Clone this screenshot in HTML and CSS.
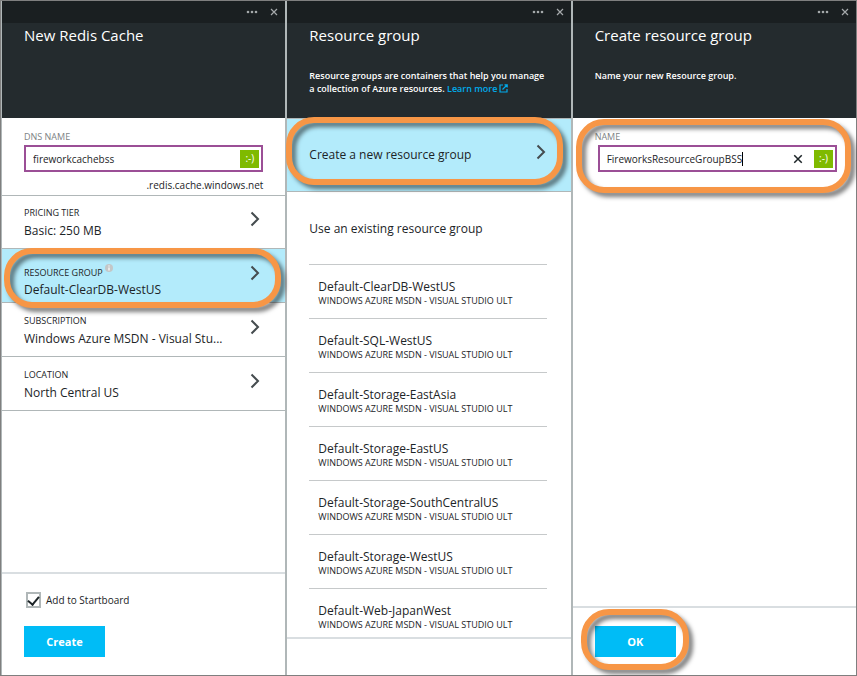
FILE: index.html
```html
<!DOCTYPE html>
<html lang="en">
<head>
<meta charset="utf-8">
<title>New Redis Cache</title>
<link rel="stylesheet" href="styles.css">
</head>
<body>
<svg width="0" height="0" class="sprite" aria-hidden="true">
  <symbol id="dots" viewBox="0 0 12 4"><circle cx="2" cy="2" r="1.3"/><circle cx="6" cy="2" r="1.3"/><circle cx="10" cy="2" r="1.3"/></symbol>
  <symbol id="cross" viewBox="0 0 8 8"><path d="M1 1 7 7M7 1 1 7"/></symbol>
  <symbol id="chevron" viewBox="0 0 10 16"><path d="M1.5 1.5 8 8 1.5 14.5"/></symbol>
</svg>
<main class="journey">
  <section class="blade">
    <header class="head">
      <div class="bar">
        <button class="tool" aria-label="More"><svg class="dots"><use href="#dots"/></svg></button>
        <button class="tool" aria-label="Close"><svg class="cross"><use href="#cross"/></svg></button>
      </div>
      <h1 class="title">New Redis Cache</h1>
    </header>
    <div class="content">
      <div class="field">
        <label class="caption" for="dns">DNS NAME</label>
        <div class="box">
          <input class="text" id="dns" value="fireworkcachebss">
          <span class="valid">:-)</span>
        </div>
        <div class="suffix">.redis.cache.windows.net</div>
      </div>
      <button class="row">
        <span class="pair"><span class="key">PRICING TIER</span><span class="value">Basic: 250 MB</span></span>
        <svg class="chevron"><use href="#chevron"/></svg>
      </button>
      <button class="row selected ring ring-row">
        <span class="pair noted"><span class="key">RESOURCE GROUP <svg class="info" viewBox="0 0 8 8"><circle cx="4" cy="4" r="4" fill="#c3c7c8"/><path d="M4 1.4v1.2M4 3.4v3" stroke="#fff" stroke-width="1.2"/></svg></span><span class="value">Default-ClearDB-WestUS</span></span>
        <svg class="chevron"><use href="#chevron"/></svg>
      </button>
      <button class="row">
        <span class="pair"><span class="key">SUBSCRIPTION</span><span class="value">Windows Azure MSDN - Visual Stu...</span></span>
        <svg class="chevron"><use href="#chevron"/></svg>
      </button>
      <button class="row">
        <span class="pair"><span class="key">LOCATION</span><span class="value">North Central US</span></span>
        <svg class="chevron"><use href="#chevron"/></svg>
      </button>
    </div>
    <footer class="foot">
      <label class="check"><input class="tick" type="checkbox" checked>Add to Startboard</label>
      <button class="primary">Create</button>
    </footer>
  </section>

  <section class="blade">
    <header class="head">
      <div class="bar">
        <button class="tool" aria-label="More"><svg class="dots"><use href="#dots"/></svg></button>
        <button class="tool" aria-label="Close"><svg class="cross"><use href="#cross"/></svg></button>
      </div>
      <h1 class="title">Resource group</h1>
      <p class="intro">Resource groups are containers that help you manage a collection of Azure resources. <a class="link" href="#learn">Learn more <svg class="external" viewBox="0 0 9 9"><path d="M4 1H1v7h7V5M5.5.8h2.7v2.7M8 1 3.5 5.5"/></svg></a></p>
    </header>
    <div class="content">
      <button class="create selected ring ring-create">
        <span class="value">Create a new resource group</span>
        <svg class="chevron"><use href="#chevron"/></svg>
      </button>
      <h2 class="subhead">Use an existing resource group</h2>
      <ul class="groups">
        <li><button class="group"><span class="value">Default-ClearDB-WestUS</span><span class="key">WINDOWS AZURE MSDN - VISUAL STUDIO ULT</span></button></li>
        <li><button class="group"><span class="value">Default-SQL-WestUS</span><span class="key">WINDOWS AZURE MSDN - VISUAL STUDIO ULT</span></button></li>
        <li><button class="group"><span class="value">Default-Storage-EastAsia</span><span class="key">WINDOWS AZURE MSDN - VISUAL STUDIO ULT</span></button></li>
        <li><button class="group"><span class="value">Default-Storage-EastUS</span><span class="key">WINDOWS AZURE MSDN - VISUAL STUDIO ULT</span></button></li>
        <li><button class="group"><span class="value">Default-Storage-SouthCentralUS</span><span class="key">WINDOWS AZURE MSDN - VISUAL STUDIO ULT</span></button></li>
        <li><button class="group"><span class="value">Default-Storage-WestUS</span><span class="key">WINDOWS AZURE MSDN - VISUAL STUDIO ULT</span></button></li>
        <li><button class="group"><span class="value">Default-Web-JapanWest</span><span class="key">WINDOWS AZURE MSDN - VISUAL STUDIO ULT</span></button></li>
      </ul>
    </div>
    <footer class="foot empty"></footer>
  </section>

  <section class="blade">
    <header class="head">
      <div class="bar">
        <button class="tool" aria-label="More"><svg class="dots"><use href="#dots"/></svg></button>
        <button class="tool" aria-label="Close"><svg class="cross"><use href="#cross"/></svg></button>
      </div>
      <h1 class="title">Create resource group</h1>
      <p class="intro">Name your new Resource group.</p>
    </header>
    <div class="content">
      <div class="field named ring ring-field">
        <label class="caption" for="group">NAME</label>
        <div class="box">
          <input class="text fitted" id="group" value="FireworksResourceGroupBSS"><span class="caret"></span>
          <button class="clear" aria-label="Clear"><svg class="cross"><use href="#cross"/></svg></button>
          <span class="valid">:-)</span>
        </div>
      </div>
    </div>
    <footer class="foot short">
      <div class="ring ring-ok"><button class="primary">OK</button></div>
    </footer>
  </section>
</main>
</body>
</html>
```

FILE: styles.css
```css
* { box-sizing: border-box; }

body {
  margin: 0;
  font-family: "Open Sans", "Noto Sans", sans-serif;
  font-size: 12px;
  color: #1c2427;
}

button, input {
  font: inherit;
  color: inherit;
  background: none;
  border: 0;
  padding: 0;
  margin: 0;
  text-align: left;
}

.sprite { position: absolute; }

.journey {
  display: grid;
  grid-template-columns: repeat(3, 1fr);
  gap: 2px;
  min-height: 100vh;
  border: 1px solid #7f7f7f;
  padding-left: 1px;
  background: #b0b7b8;
}

.blade {
  display: flex;
  flex-direction: column;
  min-width: 0;
  background: #fff;
}

.head {
  height: 117px;
  background: #242b2e;
  color: #fff;
}
.bar {
  display: flex;
  justify-content: flex-end;
  align-items: center;
  gap: 12px;
  height: 22px;
  padding-right: 7px;
  background: #1a1f21;
}
.tool { display: flex; }
.dots { width: 12px; height: 4px; fill: #a5a9ab; }
.cross { width: 8px; height: 8px; fill: none; stroke: #a5a9ab; stroke-width: 1.2; }
.title {
  margin: 0;
  padding: 1px 22px;
  font-size: 15px;
  line-height: 22px;
  font-weight: 400;
}
.intro {
  margin: 0;
  padding: 22px 22px 0;
  font-size: 9px;
  line-height: 13px;
  font-weight: 600;
}
.link { display: inline-block; color: #00abec; text-decoration: none; }
.external { width: 9px; height: 9px; margin-left: -1px; vertical-align: -1px; fill: none; stroke: #00abec; stroke-width: 1.2; }

.content { flex: 1; }

.field {
  padding: 11px 22px 0;
  height: 77px;
}
.caption {
  display: block;
  font-size: 9px;
  line-height: 16px;
  color: #7d8284;
}
.box {
  display: flex;
  align-items: center;
  height: 27px;
  border: 2px solid #9b4f96;
  padding: 0 2px 0 7px;
  font-size: 10px;
}
.text { flex: 1; min-width: 0; outline: 0; }
.fitted { flex: none; field-sizing: content; }
.caret { width: 1px; height: 14px; background: #000; }
.clear { display: flex; margin-left: auto; margin-right: 11px; }
.clear .cross { width: 10px; height: 10px; stroke: #1c2427; }
.valid {
  width: 19px;
  height: 18px;
  background: #7fba00;
  color: #fff;
  line-height: 16px;
  text-align: center;
}
.suffix { font-size: 10px; line-height: 26px; text-align: right; }
.named { padding-left: 25px; padding-right: 19px; }
.named .caption { margin-left: -3px; }

.row {
  display: flex;
  justify-content: space-between;
  width: 100%;
  height: 54px;
  padding: 8px 25px 0 22px;
  border-bottom: 1px solid #b0b7b8;
}
.field + .row { padding-top: 7px; border-top: 1px solid #b0b7b8; }
.pair, .group { display: flex; flex-direction: column; }
.key { font-size: 9px; line-height: 16px; }
.value { font-size: 12px; line-height: 18px; white-space: nowrap; }
.pair .key { line-height: 19px; }
.noted { padding-top: 7px; }
.noted .key { line-height: 16px; }
.info { width: 8px; height: 8px; vertical-align: 4px; }
.chevron { width: 10px; height: 16px; margin-top: 8px; flex: none; fill: none; stroke: #454c4f; stroke-width: 2; }
.selected { background: #b3ebfb; }

.create {
  display: flex;
  justify-content: space-between;
  align-items: center;
  width: 100%;
  height: 74px;
  padding: 0 25px 0 22px;
  border-top: 1px solid #b0b7b8;
  border-bottom: 1px solid #b0b7b8;
}
.create .chevron { margin: 0 0 6px; }
.subhead {
  margin: 0;
  padding: 26px 22px 24px;
  font-size: 12px;
  line-height: 22px;
  font-weight: 400;
}
.groups { list-style: none; margin: 0; padding: 0 24px 0 22px; }
.group {
  width: 100%;
  height: 54px;
  padding: 13px 9px 0;
  border-top: 1px solid #c6c9ca;
}
.group .key { line-height: 10px; }
.groups li:last-child .group { height: 49px; }

.foot {
  height: 103px;
  padding: 17px 22px 0;
  border-top: 2px solid #d9dee1;
}
.foot.short { height: 69px; padding-top: 18px; }
.foot.empty { height: 38px; }
.check {
  display: flex;
  align-items: center;
  gap: 5px;
  height: 17px;
  margin-bottom: 18px;
  padding-left: 2px;
  font-size: 10px;
}
.tick {
  appearance: none;
  display: flex;
  justify-content: center;
  width: 15px;
  height: 16px;
  border: 2px solid #b0b7b8;
  background: #fff;
}
.tick:checked::after {
  content: "";
  width: 5px;
  height: 9px;
  border: solid #1c2427;
  border-width: 0 2px 2px 0;
  transform: rotate(40deg);
}
.primary {
  width: 81px;
  height: 31px;
  background: #00bcf6;
  color: #fff;
  font-size: 11px;
  font-weight: 700;
  text-align: center;
}

/* Orange callouts drawn over the highlighted controls */
.ring { position: relative; }
.ring::after {
  content: "";
  position: absolute;
  z-index: 1;
  border: 6px solid #f79646;
  border-radius: 28px;
  filter: drop-shadow(4px 4px 2px rgba(0, 0, 0, 0.5));
  pointer-events: none;
}
.ring-row::after { inset: -1px 4px -6px 2px; }
.ring-create::after { inset: -2px 8px 6px -1px; }
.ring-field::after { inset: 1px 5px 2px 3px; }
.ring-ok { width: 81px; }
.ring-ok::after { inset: -17px -13px -13px -14px; }
```
